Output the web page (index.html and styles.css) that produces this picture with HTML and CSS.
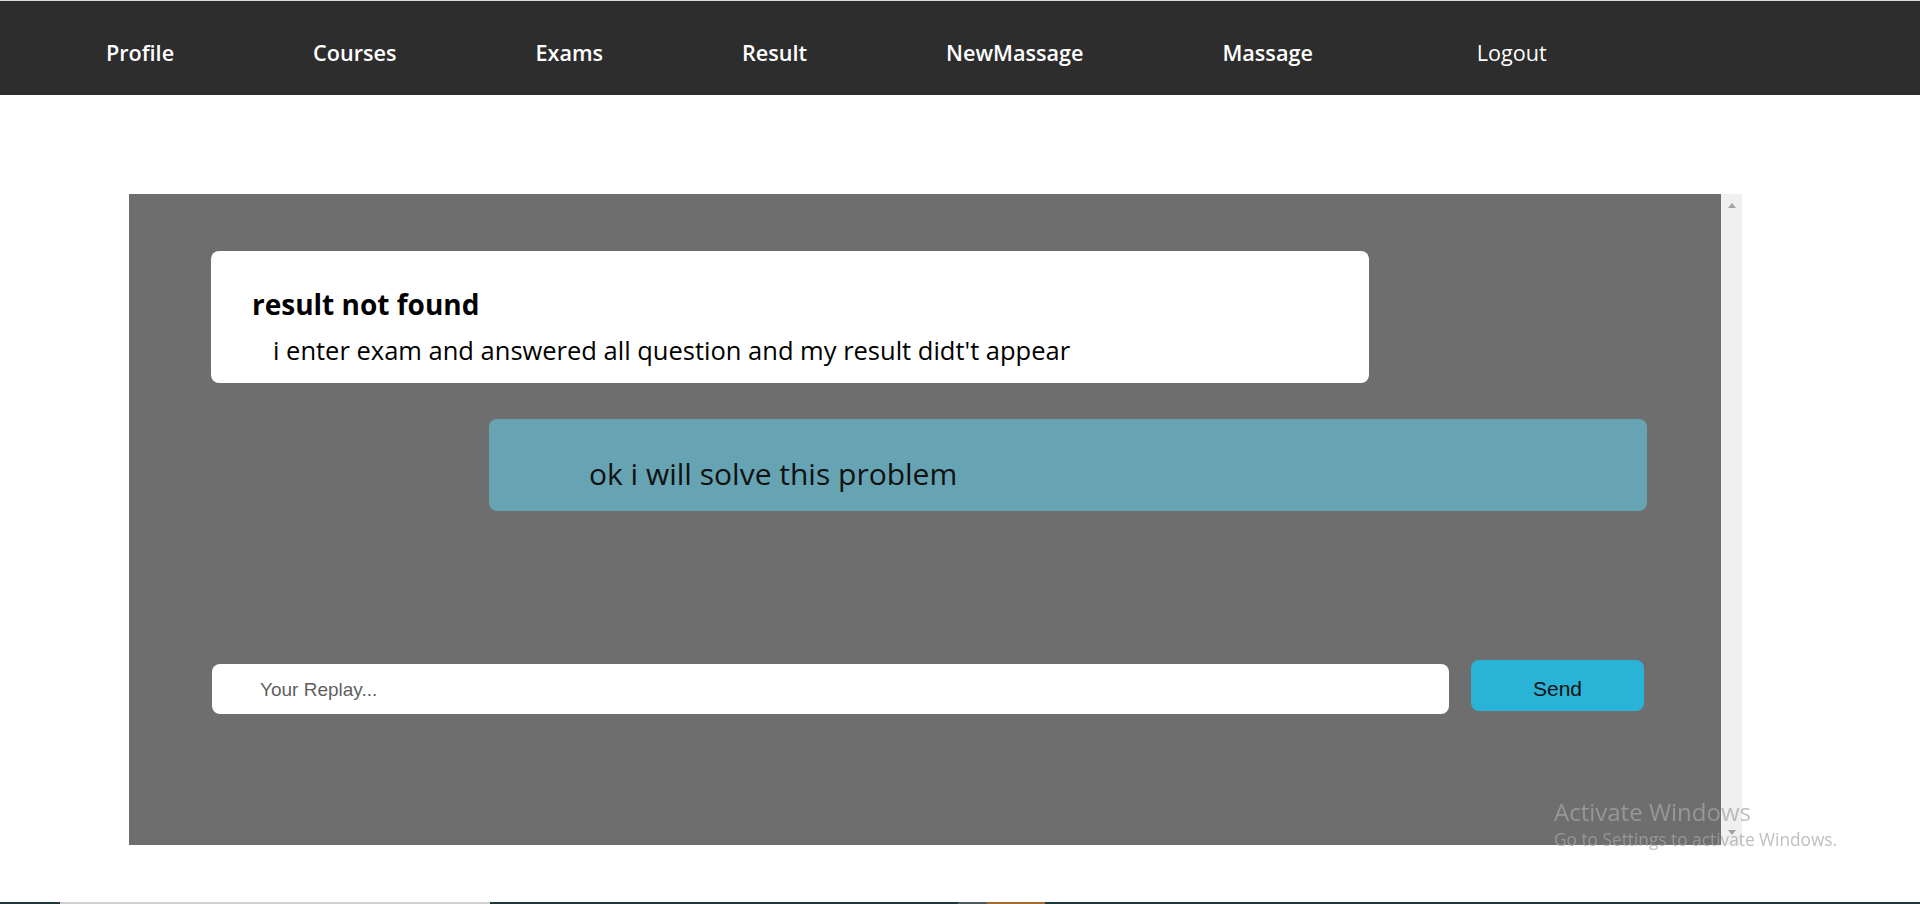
FILE: index.html
```html
<!DOCTYPE html>
<html lang="en">
<head>
<meta charset="utf-8">
<title>Massage</title>
<link rel="stylesheet" href="styles.css">
</head>
<body>
<nav class="topnav">
  <a class="nav-link" href="#">Profile</a>
  <a class="nav-link" href="#">Courses</a>
  <a class="nav-link" href="#">Exams</a>
  <a class="nav-link" href="#">Result</a>
  <a class="nav-link" href="#">NewMassage</a>
  <a class="nav-link" href="#">Massage</a>
  <a class="nav-link nav-logout" href="#">Logout</a>
</nav>

<main class="main">
  <div class="chat-frame">
    <section class="chat-panel">
      <div class="msg msg-user">
        <h3 class="msg-title">result not found</h3>
        <p class="msg-body">i enter exam and answered all question and my result didt't appear</p>
      </div>
      <div class="msg msg-reply">
        <p class="reply-text">ok i will solve this problem</p>
      </div>
      <form class="reply-form">
        <input class="reply-input" type="text" placeholder="Your Replay...">
        <button class="send-btn" type="button">Send</button>
      </form>
    </section>
    <div class="scrollbar">
      <span class="arrow arrow-up"></span>
      <span class="arrow arrow-down"></span>
    </div>
  </div>
</main>

<div class="watermark">
  <div class="wm-title">Activate Windows</div>
  <div class="wm-sub">Go to Settings to activate Windows.</div>
</div>

<div class="taskbar-edge">
  <span class="seg seg-dark seg-a"></span>
  <span class="seg seg-light"></span>
  <span class="seg seg-dark seg-b"></span>
  <span class="seg seg-gray"></span>
  <span class="seg seg-orange"></span>
  <span class="seg seg-dark seg-fill"></span>
</div>
</body>
</html>
```
FILE: styles.css
```css
* { box-sizing: border-box; }

html, body {
  margin: 0;
  padding: 0;
  background: #ffffff;
  height: 904px;
  overflow: hidden;
  font-family: "Open Sans", "Noto Sans", sans-serif;
}

.topnav {
  display: flex;
  align-items: center;
  gap: 139px;
  height: 95px;
  padding-left: 106px;
  padding-top: 8px;
  background: #2d2d2d;
  border-top: 1px solid #dcdcdc;
}

.nav-link {
  color: #ffffff;
  text-decoration: none;
  font-size: 21.6px;
  font-weight: 600;
}

.nav-logout {
  font-weight: 400;
  margin-left: 25px;
}

.main {
  padding-top: 99px;
  padding-left: 129px;
}

.chat-frame {
  display: flex;
  height: 651px;
}

.chat-panel {
  width: 1592px;
  background: #6e6e6e;
  padding-top: 57px;
  display: flex;
  flex-direction: column;
}

.msg {
  width: 1158px;
  border-radius: 8px;
}

.msg-user {
  margin-left: 82px;
  height: 132px;
  background: #ffffff;
  padding: 36px 30px 0 41px;
}

.msg-title {
  margin: 0;
  font-size: 28px;
  line-height: 34px;
  font-weight: 700;
  color: #000;
}

.msg-body {
  margin: 14px 0 0 0;
  padding-left: 21px;
  font-size: 25.5px;
  line-height: 30px;
  color: #000;
}

.msg-reply {
  margin-top: 36px;
  margin-left: 360px;
  height: 92px;
  background: #66a3b3;
  padding: 35px 30px 0 100px;
}

.reply-text {
  margin: 0;
  font-size: 30px;
  line-height: 40px;
  color: #111;
}

.reply-form {
  display: flex;
  align-items: flex-start;
  gap: 22px;
  margin-top: 149px;
  margin-left: 83px;
}

.reply-input {
  margin-top: 4px;
  width: 1237px;
  height: 50px;
  border: none;
  border-radius: 8px;
  background: #ffffff;
  padding: 2px 0 0 48px;
  font-family: "Liberation Sans", Arial, sans-serif;
  font-size: 19px;
  color: #333;
  outline: none;
}

.reply-input::placeholder {
  color: #5f5f5f;
}

.send-btn {
  width: 173px;
  height: 51px;
  border: none;
  border-radius: 8px;
  background: #29b3d6;
  font-family: "Liberation Sans", Arial, sans-serif;
  font-size: 21px;
  color: #111;
  padding: 6px 0 0 0;
}

.scrollbar {
  width: 21px;
  background: #f0f0f0;
  display: flex;
  flex-direction: column;
  justify-content: space-between;
  align-items: center;
  padding: 9px 0 10px;
}

.arrow {
  width: 0;
  height: 0;
  border-left: 4px solid transparent;
  border-right: 4px solid transparent;
}

.arrow-up {
  border-bottom: 5px solid #a3a3a3;
}

.arrow-down {
  border-top: 5px solid #a3a3a3;
}

.watermark {
  position: fixed;
  left: 1554px;
  top: 795px;
  color: rgba(166, 166, 166, 0.72);
  font-family: "Open Sans", "Noto Sans", sans-serif;
  white-space: nowrap;
}

.wm-title {
  font-size: 24px;
  line-height: 33px;
}

.wm-sub {
  font-size: 17.3px;
  line-height: 24px;
}

.taskbar-edge {
  position: fixed;
  left: 0;
  bottom: 0;
  width: 1920px;
  height: 2px;
  display: flex;
}

.seg { display: block; height: 2px; }
.seg-dark { background: #1f383e; }
.seg-a { width: 60px; }
.seg-light { width: 430px; background: #cfcfcf; }
.seg-b { width: 468px; }
.seg-gray { width: 29px; background: #4d5a5e; }
.seg-orange { width: 58px; background: #a8692f; }
.seg-fill { flex: 1; }
```
